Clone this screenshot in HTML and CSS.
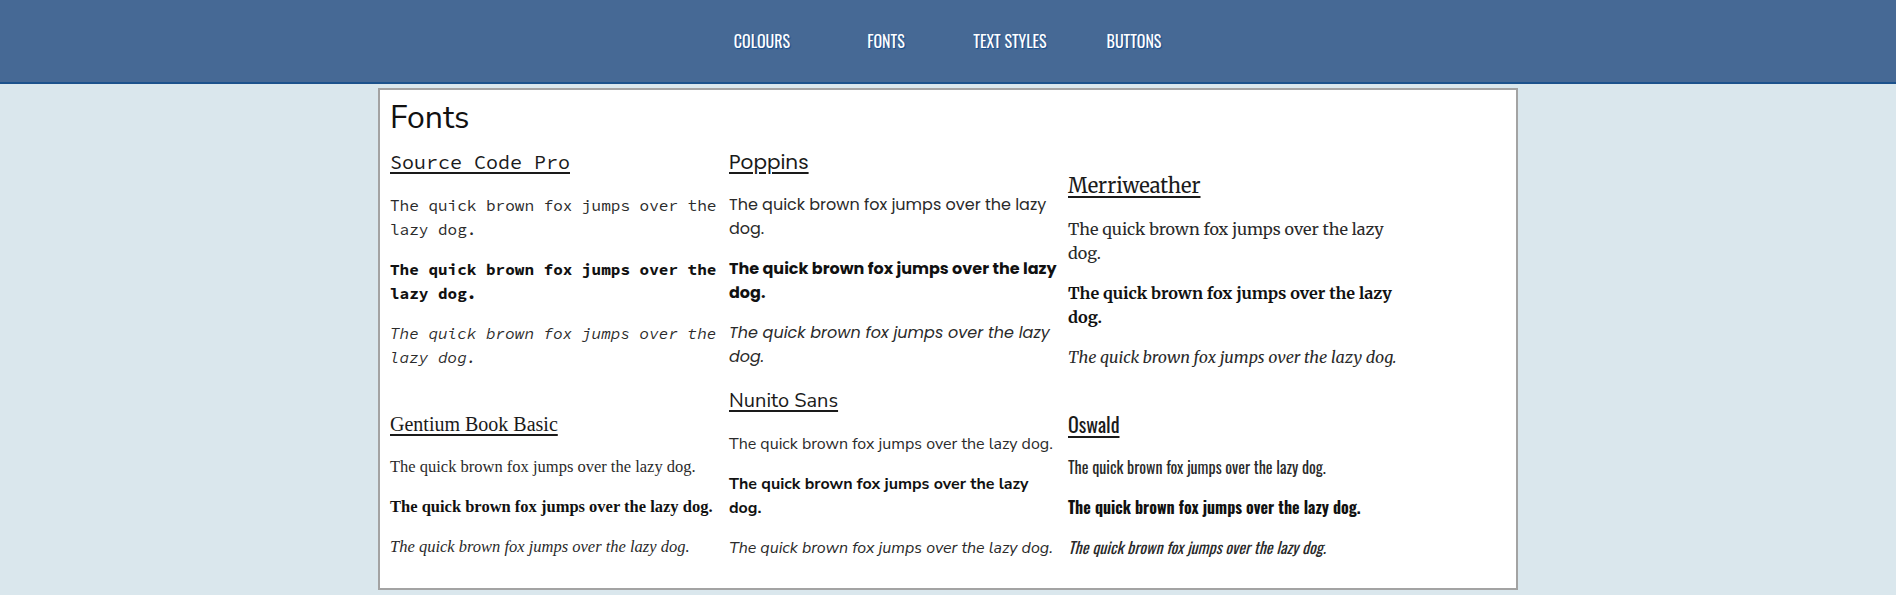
FILE: index.html
```html
<!DOCTYPE html>
<html lang="en">
<head>
<meta charset="utf-8">
<title>Fonts</title>
<link rel="stylesheet" href="styles.css">
</head>
<body>
<header class="topbar">
  <nav class="nav">
    <a class="nav-link" href="#">Colours</a>
    <a class="nav-link" href="#">Fonts</a>
    <a class="nav-link" href="#">Text Styles</a>
    <a class="nav-link" href="#">Buttons</a>
  </nav>
</header>
<main class="card">
  <h1 class="title">Fonts</h1>
  <div class="columns">
    <div class="col">
      <section class="font-block f-source">
        <h2 class="font-name">Source Code Pro</h2>
        <p>The quick brown fox jumps over the lazy dog.</p>
        <p class="bold">The quick brown fox jumps over the lazy dog.</p>
        <p class="ital">The quick brown fox jumps over the lazy dog.</p>
      </section>
      <section class="font-block f-gentium second">
        <h2 class="font-name">Gentium Book Basic</h2>
        <p>The quick brown fox jumps over the lazy dog.</p>
        <p class="bold">The quick brown fox jumps over the lazy dog.</p>
        <p class="ital">The quick brown fox jumps over the lazy dog.</p>
      </section>
    </div>
    <div class="col">
      <section class="font-block f-poppins">
        <h2 class="font-name">Poppins</h2>
        <p>The quick brown fox jumps over the lazy dog.</p>
        <p class="bold">The quick brown fox jumps over the lazy dog.</p>
        <p class="ital">The quick brown fox jumps over the lazy dog.</p>
      </section>
      <section class="font-block f-nunito second-tight">
        <h2 class="font-name">Nunito Sans</h2>
        <p>The quick brown fox jumps over the lazy dog.</p>
        <p class="bold">The quick brown fox jumps over the lazy dog.</p>
        <p class="ital">The quick brown fox jumps over the lazy dog.</p>
      </section>
    </div>
    <div class="col">
      <section class="font-block f-merri first-low">
        <h2 class="font-name">Merriweather</h2>
        <p>The quick brown fox jumps over the lazy dog.</p>
        <p class="bold">The quick brown fox jumps over the lazy dog.</p>
        <p class="ital">The quick brown fox jumps over the lazy dog.</p>
      </section>
      <section class="font-block f-oswald second">
        <h2 class="font-name">Oswald</h2>
        <p>The quick brown fox jumps over the lazy dog.</p>
        <p class="bold">The quick brown fox jumps over the lazy dog.</p>
        <p class="ital">The quick brown fox jumps over the lazy dog.</p>
      </section>
    </div>
  </div>
</main>
</body>
</html>
```
FILE: styles.css
```css
* { box-sizing: border-box; }

body {
  margin: 0;
  background: #dae7ed;
  color: #222;
  font-family: "Liberation Sans", Arial, sans-serif;
}

.topbar {
  height: 84px;
  background: #466995;
  border-bottom: 2px solid #1c528c;
  display: flex;
  align-items: center;
  justify-content: center;
}

.nav {
  display: grid;
  grid-template-columns: repeat(4, 124px);
  margin-top: -1px;
}

.nav-link {
  text-align: center;
  color: #fff;
  text-decoration: none;
  text-transform: uppercase;
  font-family: "Oswald", "Liberation Sans Narrow", "DejaVu Sans Condensed", sans-serif;
  font-weight: 400;
  font-size: 16px;
  line-height: 20px;
  text-shadow: 1px 1px 1px #0e4a8c;
}

.card {
  width: 1140px;
  margin: 4px auto 0;
  background: #fff;
  border: 2px solid #a3a3a3;
  padding: 9px 11px 12px 10px;
}

.title {
  margin: 0 0 13px;
  font-family: "Nunito Sans", Lato, sans-serif;
  font-weight: 400;
  font-size: 32px;
  line-height: 38px;
  color: #111;
}

.columns {
  display: grid;
  grid-template-columns: 339px 339px 339px;
}

.col {
  display: flex;
  flex-direction: column;
}

.font-name {
  margin: 0 0 19px;
  font-size: 20px;
  line-height: 24px;
  font-weight: 400;
  text-decoration: underline;
  text-decoration-thickness: 2px;
  text-underline-offset: 3px;
  color: #1a1a1a;
}

.font-block p {
  margin: 0 0 16px;
  font-size: 16px;
  line-height: 24px;
  color: #2a2a2a;
}

.font-block p.bold { font-weight: 700; color: #111; }
.font-block p.ital { font-style: italic; }

.second { margin-top: 27px; }
.second-tight { margin-top: 4px; }
.first-low { margin-top: 24px; }

.f-source { font-family: "Source Code Pro", "Liberation Mono", monospace; }
.f-poppins { font-family: "Poppins", "DejaVu Sans", sans-serif; }
.f-merri { font-family: "Merriweather", "DejaVu Serif", serif; }
.f-gentium { font-family: "Gentium Book Basic", "Liberation Serif", serif; }
.f-nunito { font-family: "Nunito Sans", Lato, sans-serif; }
.f-oswald { font-family: "Oswald", "Liberation Sans Narrow", "DejaVu Sans Condensed", sans-serif; }

.f-gentium p { font-size: 16.5px; }
.f-gentium p:first-of-type { margin-top: 2px; }
.f-nunito p.bold { max-width: 330px; }
.f-merri p { font-size: 16.2px; }
```
